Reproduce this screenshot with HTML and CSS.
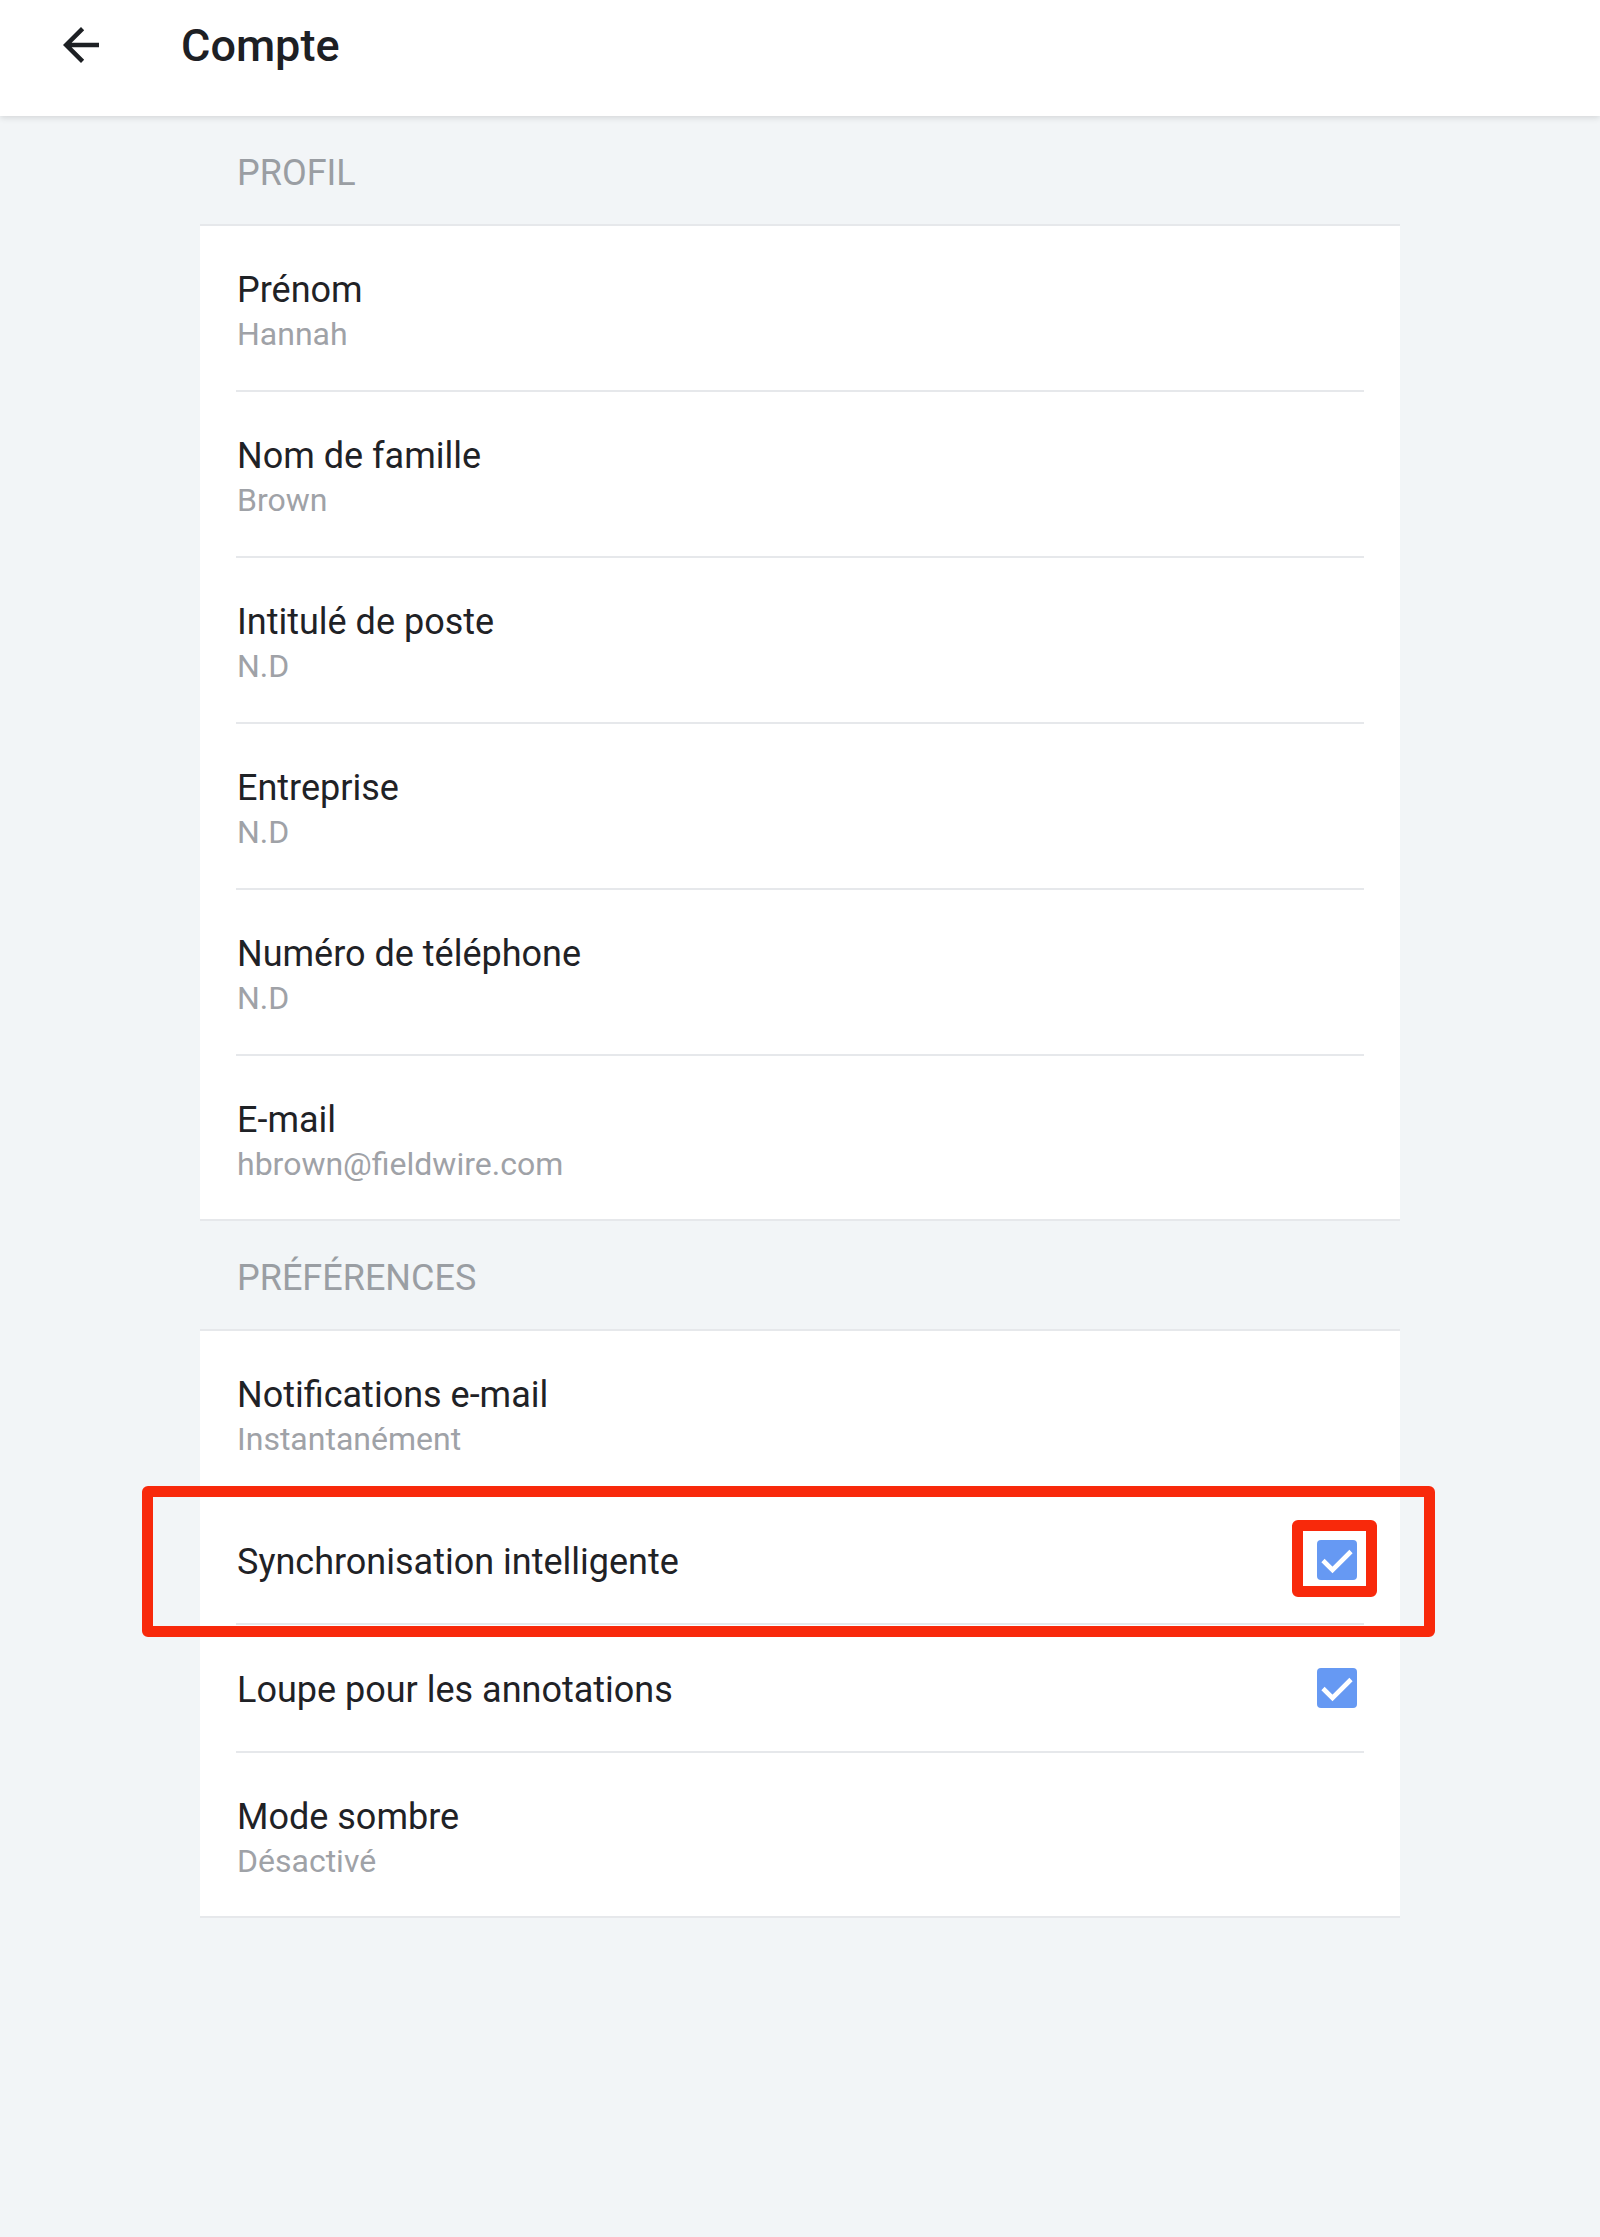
FILE: index.html
```html
<!DOCTYPE html>
<html lang="fr">
<head>
<meta charset="utf-8">
<title>Compte</title>
<link rel="stylesheet" href="styles.css">
</head>
<body>
<header class="appbar">
  <div class="appbar-inner">
    <svg class="back" viewBox="0 0 24 24" width="54" height="54" aria-hidden="true">
      <path d="M20 11H7.83l5.59-5.59L12 4l-8 8 8 8 1.41-1.41L7.83 13H20v-2z" fill="#1d2024"/>
    </svg>
    <h1 class="title">Compte</h1>
  </div>
</header>

<main class="content">
  <h2 class="section">PROFIL</h2>
  <section class="card">
    <div class="row two"><div class="row-inner"><div class="label">Prénom</div><div class="value">Hannah</div></div></div>
    <div class="row two"><div class="row-inner"><div class="label">Nom de famille</div><div class="value">Brown</div></div></div>
    <div class="row two"><div class="row-inner"><div class="label">Intitulé de poste</div><div class="value">N.D</div></div></div>
    <div class="row two"><div class="row-inner"><div class="label">Entreprise</div><div class="value">N.D</div></div></div>
    <div class="row two"><div class="row-inner"><div class="label">Numéro de téléphone</div><div class="value">N.D</div></div></div>
    <div class="row two last"><div class="row-inner"><div class="label">E-mail</div><div class="value">hbrown@fieldwire.com</div></div></div>
  </section>

  <h2 class="section">PRÉFÉRENCES</h2>
  <section class="card">
    <div class="row two"><div class="row-inner"><div class="label">Notifications e-mail</div><div class="value">Instantanément</div></div></div>
    <div class="row one highlighted">
      <div class="row-inner">
        <div class="label">Synchronisation intelligente</div>
        <svg class="check" viewBox="0 0 40 40" width="40" height="40" aria-hidden="true">
          <rect x="0" y="0" width="40" height="40" rx="4" fill="#6699f3"/>
          <polyline points="6,20.5 15.5,30 34,11.5" fill="none" stroke="#fff" stroke-width="4.6"/>
        </svg>
      </div>
      <div class="mark mark-outer"></div>
      <div class="mark mark-inner"></div>
    </div>
    <div class="row one">
      <div class="row-inner">
        <div class="label">Loupe pour les annotations</div>
        <svg class="check" viewBox="0 0 40 40" width="40" height="40" aria-hidden="true">
          <rect x="0" y="0" width="40" height="40" rx="4" fill="#6699f3"/>
          <polyline points="6,20.5 15.5,30 34,11.5" fill="none" stroke="#fff" stroke-width="4.6"/>
        </svg>
      </div>
    </div>
    <div class="row two last"><div class="row-inner"><div class="label">Mode sombre</div><div class="value">Désactivé</div></div></div>
  </section>
</main>
</body>
</html>
```

FILE: styles.css
```css
* { box-sizing: border-box; }

html, body {
  margin: 0;
  padding: 0;
}

body {
  background: #f2f5f7;
  font-family: Roboto, "Noto Sans", "Liberation Sans", sans-serif;
  min-height: 2237px;
}

.appbar {
  height: 116px;
  background: #ffffff;
  box-shadow: 0 2px 6px rgba(0, 0, 0, 0.12);
  position: relative;
  z-index: 2;
}

.appbar-inner {
  height: 90px;
  display: flex;
  align-items: center;
  padding-left: 54px;
}

.back {
  display: block;
  flex: none;
}

.title {
  margin: 0 0 0 73px;
  font-size: 45px;
  line-height: 54px;
  font-weight: 500;
  color: #1d2024;
  padding-top: 2px;
}

.content {
  width: 1200px;
  margin-left: 200px;
}

.section {
  margin: 0;
  padding: 35px 0 29px 37px;
  font-size: 36px;
  line-height: 44px;
  font-weight: 400;
  color: #9a9ea3;
}

.card {
  background: #ffffff;
  border-top: 2px solid #e6e8eb;
  border-bottom: 2px solid #e6e8eb;
}

.row {
  padding: 0 36px;
  position: relative;
}

.row-inner {
  border-bottom: 2px solid #e6e8eb;
  padding-left: 1px;
}

.row.last .row-inner {
  border-bottom: none;
}

.row.two .row-inner {
  height: 166px;
  padding-top: 42px;
}

.row.two.last .row-inner {
  height: 163px;
}

.row.one .row-inner {
  height: 128px;
  display: flex;
  align-items: center;
  justify-content: space-between;
  padding-right: 7px;
}

.row.one .label {
  padding-top: 4px;
}

.label {
  font-size: 36px;
  line-height: 44px;
  color: #1f2226;
}

.value {
  font-size: 32px;
  line-height: 44px;
  color: #9fa2a7;
}

.check {
  display: block;
  flex: none;
}

.mark {
  position: absolute;
  border: 11px solid #f8290b;
  border-radius: 6px;
  pointer-events: none;
}

.mark-outer {
  left: -58px;
  top: -11px;
  width: 1293px;
  height: 151px;
}

.mark-inner {
  left: 1092px;
  top: 23px;
  width: 85px;
  height: 77px;
}
```
